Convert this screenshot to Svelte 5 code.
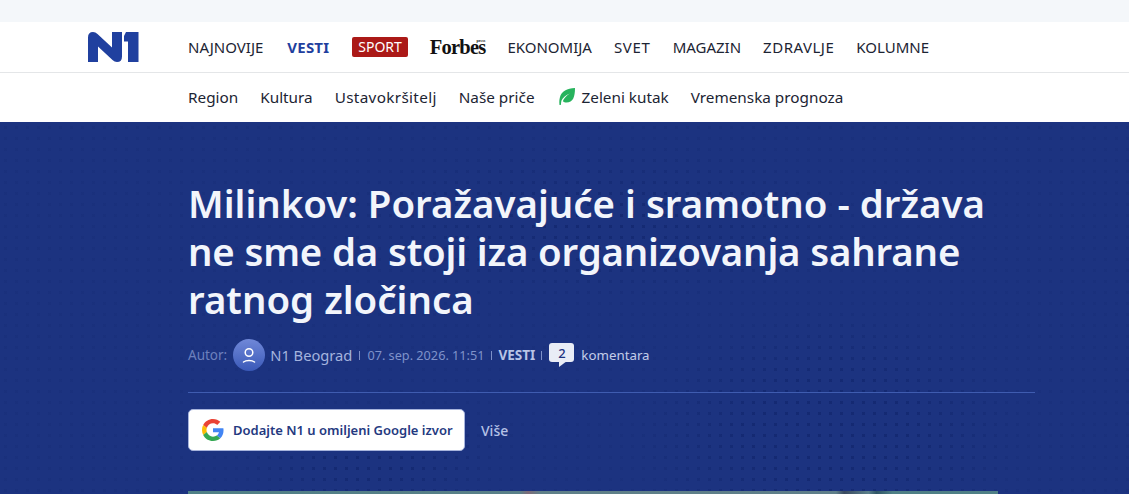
<script>
  const mainNav = [
    { label: 'NAJNOVIJE' },
    { label: 'VESTI', cls: 'active' },
    { label: 'SPORT', cls: 'sport' },
    { label: 'Forbes', cls: 'forbes' },
    { label: 'EKONOMIJA' },
    { label: 'SVET', cls: 'wide' },
    { label: 'MAGAZIN' },
    { label: 'ZDRAVLJE', cls: 'zd' },
    { label: 'KOLUMNE' }
  ];
  const subNav = [
    { label: 'Region' },
    { label: 'Kultura' },
    { label: 'Ustavokršitelj', cls: 'semi' },
    { label: 'Naše priče' }
  ];
</script>

<div class="strip"></div>
<header class="main">
  <svg class="logo" viewBox="0 0 52 30" aria-label="N1">
    <path d="M1 30V5.500Q1 0 6 0 8.500 0 10.500 2L25 15.500V0H35V24.500Q35 30 30 30 27.500 30 25.500 28L11 14.500V30Z" fill="#20409f"/>
    <path d="M41 30V9.500H37V4L39 0H51.500V30Z" fill="#20409f"/>
  </svg>
  <nav class="nav">
    {#each mainNav as item}
      {#if item.cls === 'forbes'}
        <a class="forbes"><sup>press</sup>Forbes</a>
      {:else}
        <a class={item.cls}>{item.label}</a>
      {/if}
    {/each}
  </nav>
</header>
<nav class="sub">
  {#each subNav as s}<a class={s.cls}>{s.label}</a>{/each}
  <a class="leaf">
    <svg viewBox="0 0 16 17" width="16" height="17">
      <path fill-rule="evenodd" d="M16 0C16 9 14 14.500 7.500 14.500 6 14.500 4.800 14 3.800 13.200 5 10 7.500 7.500 11 5.500 7 7 3.800 9.500 2.400 12.800L1.800 17H.5C.1 14 .3 11.500 1 9 2.500 3.500 8 .3 16 0Z" fill="#27b35d"/>
    </svg>
    Zeleni kutak
  </a>
  <a>Vremenska prognoza</a>
</nav>

<section class="hero">
  <div class="inner">
    <h1>Milinkov: Poražavajuće i sramotno - država<br /><span class="tight">ne sme da stoji iza organizovanja sahrane</span><br />ratnog zločinca</h1>
    <div class="meta">
      <span class="autor">Autor:</span>
      <span class="avatar">
        <svg viewBox="0 0 32 32" width="32" height="32" fill="none" stroke="#fff" stroke-width="1.500" stroke-linecap="round">
          <circle cx="16" cy="13.500" r="3.800" />
          <path d="M10.500 23C13 21 19 21 21.500 23" />
        </svg>
      </span>
      <span class="name">N1 Beograd</span>
      <i></i>
      <span class="date">07. sep. 2026. 11:51</span>
      <i></i>
      <b>VESTI</b>
      <i></i>
      <span class="bubble">2</span>
      <span class="kom">komentara</span>
    </div>
    <div class="rule"></div>
    <div class="actions">
      <a class="gbtn">
        <svg viewBox="0 0 48 48" width="22" height="22">
          <path fill="#EA4335" d="M24 9.500c3.540 0 6.710 1.220 9.210 3.600l6.850-6.850C35.900 2.380 30.470 0 24 0 14.620 0 6.510 5.380 2.560 13.220l7.980 6.190C12.430 13.720 17.740 9.500 24 9.500z"/>
          <path fill="#4285F4" d="M46.980 24.550c0-1.570-.15-3.090-.38-4.550H24v9.020h12.940c-.58 2.960-2.260 5.480-4.780 7.180l7.730 6c4.510-4.180 7.090-10.360 7.090-17.650z"/>
          <path fill="#FBBC05" d="M10.530 28.590c-.48-1.450-.76-2.990-.76-4.590s.27-3.140.76-4.590l-7.980-6.190C.92 16.460 0 20.120 0 24c0 3.880.92 7.540 2.560 10.780l7.970-6.190z"/>
          <path fill="#34A853" d="M24 48c6.480 0 11.930-2.130 15.890-5.810l-7.730-6c-2.150 1.450-4.920 2.300-8.160 2.300-6.260 0-11.570-4.220-13.470-9.910l-7.980 6.190C6.510 42.620 14.620 48 24 48z"/>
        </svg>
        Dodajte N1 u omiljeni Google izvor
      </a>
      <a class="vise">Više</a>
    </div>
    <div class="photo"></div>
  </div>
</section>

<style>
  :global(body) { margin: 0; background: #fff; overflow: hidden; }
  :global(#app) { font-family: "Noto Sans", "Open Sans", sans-serif; height: 494px; overflow: hidden; }
  a { color: inherit; text-decoration: none; white-space: nowrap; }
  .strip { height: 22px; background: #f4f7fa; }
  .main { height: 50px; display: flex; align-items: center; padding-left: 87px; border-bottom: 1px solid #e4e6e8; background: #fff; }
  .logo { width: 52px; height: 30px; margin: 0 49px 1px 0; flex: none; }
  .nav { display: flex; align-items: center; gap: 22px; font-size: 15px; color: #1c2433; }
  .active { color: #1f3f9e; font-weight: 700; margin-left: 2px; letter-spacing: .2px; }
  .sport { background: #ab1917; color: #fff; padding: 0 6px; border-radius: 2px; line-height: 20px; font-size: 14px; margin-left: 1px; }
  .wide { letter-spacing: .7px; }
  .semi { letter-spacing: .33px; }
  .zd { letter-spacing: .5px; }
  .forbes { font-family: "Liberation Serif", serif; font-weight: 700; font-size: 20.500px; line-height: 16px; letter-spacing: -0.8px; color: #111; position: relative; }
  .forbes sup { position: absolute; right: 0; top: 0; font-size: 4px; letter-spacing: 0; line-height: 1; }
  .sub { height: 49px; box-sizing: border-box; display: flex; align-items: center; gap: 22px; padding: 0 0 2px 188px; background: #fff; font-size: 15.300px; color: #1c2433; }
  .leaf { display: flex; align-items: center; gap: 7px; margin-left: 2px; }
  .hero {
    position: relative;
    height: 372px;
    background-color: #1c3380;
    background-image: radial-gradient(circle, rgba(15, 35, 105, .13) 1.500px, transparent 2px);
    background-size: 11px 11px;
  }
  .hero::before {
    content: "";
    position: absolute;
    inset: 0;
    background-image: radial-gradient(circle, rgba(15, 35, 105, .5) 1.500px, transparent 2px);
    background-size: 11px 11px;
    -webkit-mask-image: radial-gradient(ellipse 190px 120px at 830px 310px, #000 40%, transparent 100%), radial-gradient(ellipse 130px 50px at 370px 340px, #000 30%, transparent 100%), radial-gradient(ellipse 260px 80px at 600px 100px, #000 10%, transparent 100%);
    mask-image: radial-gradient(ellipse 190px 120px at 830px 310px, #000 40%, transparent 100%), radial-gradient(ellipse 130px 50px at 370px 340px, #000 30%, transparent 100%), radial-gradient(ellipse 260px 80px at 600px 100px, #000 10%, transparent 100%);
  }
  .inner { padding: 57px 94px 0 188px; position: relative; }
  h1 { margin: 0; font-size: 38.400px; line-height: 48px; font-weight: 600; color: #f2f5fb; white-space: nowrap; }
  .tight { letter-spacing: -.17px; }
  .meta { margin-top: 15px; height: 34px; display: flex; align-items: center; gap: 6px; font-size: 12.700px; color: #8ea0d2; }
  .autor { color: #6c80bd; font-size: 13.500px; }
  .avatar { width: 32px; height: 32px; border-radius: 50%; background: linear-gradient(180deg, #7088d8, #3a59b8); display: block; flex: none; }
  .avatar svg { display: block; }
  .name { font-size: 14.700px; color: #a4b3de; margin: 0 1px 0 -1px; }
  .meta i { width: 1px; height: 9px; background: #7d90c8; }
  .date { color: #7f92ca; margin-left: 1px; }
  .meta b { color: #b8c4e6; font-weight: 700; font-size: 13.500px; margin-left: 1px; }
  .bubble { position: relative; width: 25px; height: 19px; margin: 0 1px 5px 1px; border-radius: 3px; background: #e9edf6; color: #1c3380; font-size: 13px; display: flex; align-items: center; justify-content: center; font-weight: 500; }
  .bubble::after { content: ""; position: absolute; left: 10px; bottom: -5px; border-top: 6px solid #e9edf6; border-right: 8px solid transparent; }
  .kom { color: #c3cde9; font-size: 13.300px; }
  .rule { height: 1px; background: #3f5cb0; margin-top: 20px; }
  .actions { margin-top: 16px; display: flex; align-items: center; gap: 16px; }
  .gbtn { width: 277px; height: 42px; box-sizing: border-box; display: flex; align-items: center; gap: 9px; padding-left: 13px; background: #fff; border: 1px solid #a7b4dc; border-radius: 5px; color: #24397f; font-size: 13px; font-weight: 600; }
  .vise { color: #b5c2e6; font-size: 14px; font-weight: 500; }
  .photo { position: absolute; left: 188px; top: 369px; width: 810px; height: 20px; background: linear-gradient(90deg, #4f8086 0, #5a8088 41%, #7d6a78 42%, #5f8088 43.500%, #5f7f8a 80%, #3a4a60 81%, #5a7f8a 84%, #2f5566 85%, #4f8086 87%, #4f8086 100%); }
</style>
